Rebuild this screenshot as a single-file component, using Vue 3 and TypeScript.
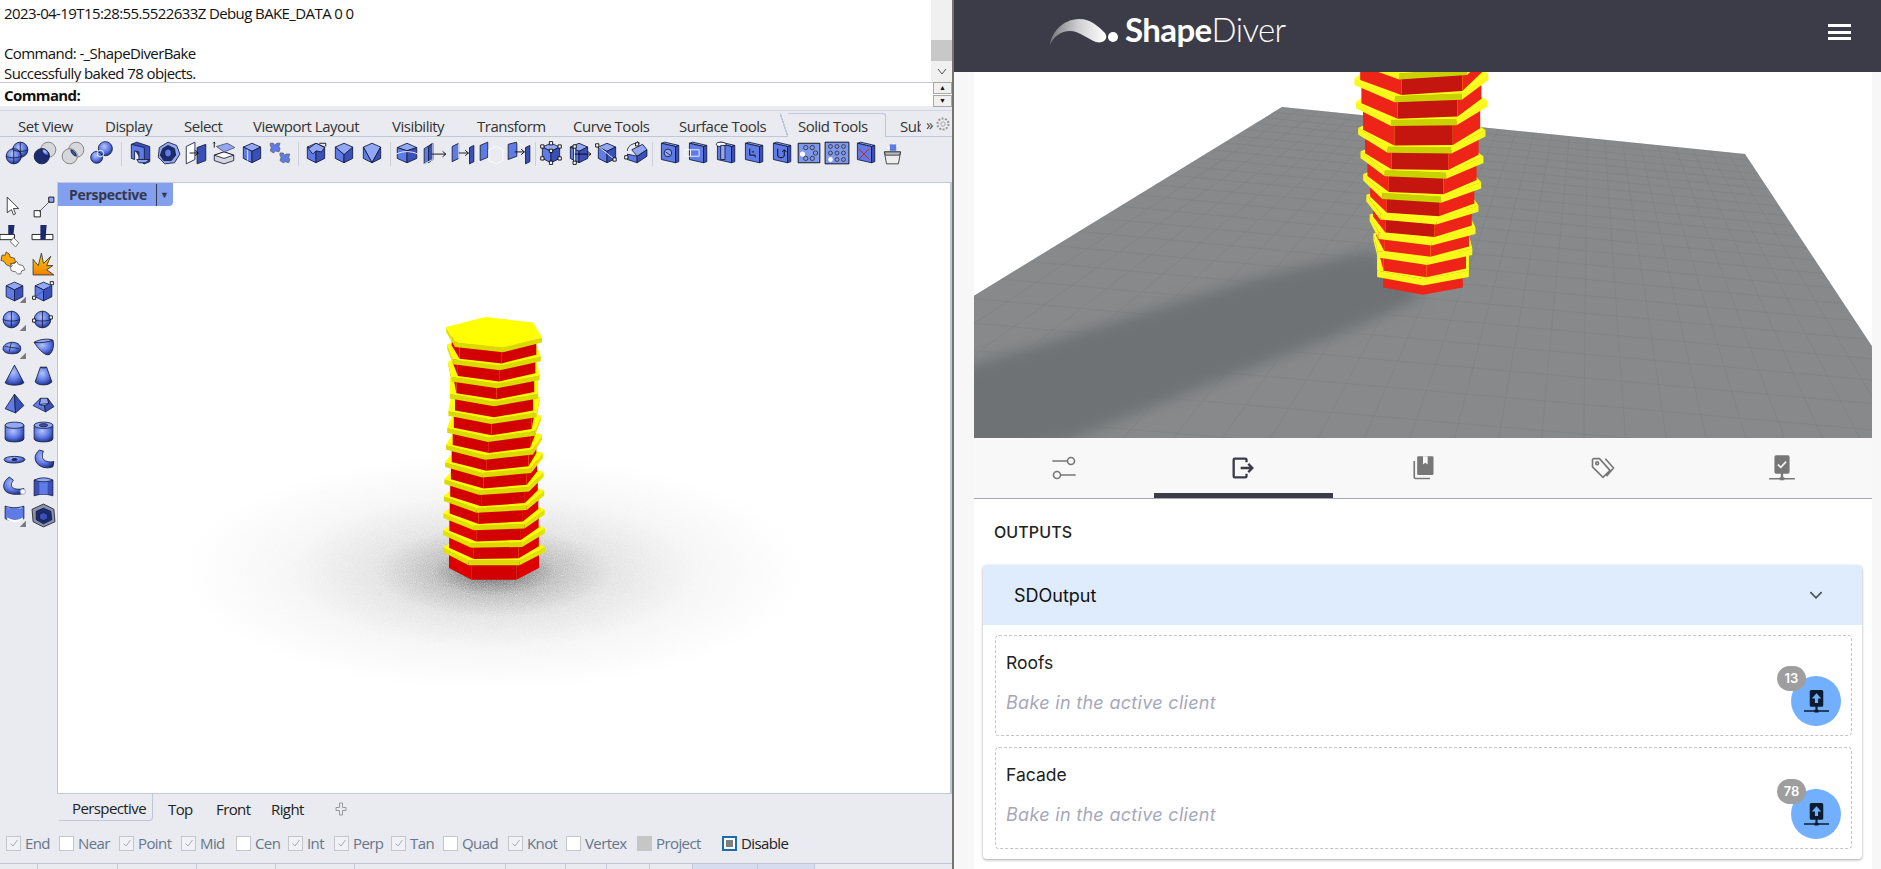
<script setup lang="ts">
type Prim = [string, string, string?]

const circ = (x: number, y: number, r: number) =>
  `M${x - r} ${y}a${r} ${r} 0 1 0 ${2 * r} 0a${r} ${r} 0 1 0 ${-2 * r} 0z`

const T = '#93a8f4'
const L = '#5f7be6'
const R = '#3a4fb8'
const D = '#1c2a70'
const G = '#d6d7da'
const S = 'url(#rb)'
const W = '#ffffff'
const K = '#141c3c'
const NONE = 'none'
const flag: Prim = ['#77787c', 'M23 17v6h-6z', NONE]

const cube: Prim[] = [
  [T, 'M12 3l8 3.5-8 4-8-4z'],
  [L, 'M4 6.5l8 4V21l-8-4z'],
  [R, 'M20 6.5l-8 4V21l8-4z'],
]
const plate: Prim[] = [
  [T, 'M5 3l3-1 13 3-3 1z'],
  [L, 'M5 3l13 3v15L5 18z'],
  [R, 'M18 6l3-1v15l-3 1z'],
]
const handle = (x: number, y: number): Prim => [W, `M${x - 1.5} ${y - 1.5}h3v3h-3z`, '#000']
const arrowR = (x: number, y: number, w: number): Prim => [NONE, `M${x} ${y}h${w}m-3-2.5 3 2.5-3 2.5`, '#000']

const topIcons: (Prim[] | number)[] = [
  [[S, circ(15, 9, 7)], [S, circ(9, 15, 7)], [NONE, 'M2 15c4 2 10 2 14 0M9 8v14M8 9c4 2 10 2 14 0M15 2v12']],
  [[G, circ(15, 9, 7), '#777'], [D, circ(9, 15, 7)], [S, 'M9 8a7 7 0 0 1 7 7 7 7 0 0 1-7-7z']],
  [[G, circ(15, 9, 7), '#777'], [G, circ(9, 15, 7), '#777'], [R, 'M10 9a7 7 0 0 1 5 6 7 7 0 0 1-5-6z']],
  [[S, circ(8, 16, 5.5)], [S, circ(16, 8, 6.5)], [NONE, circ(11.5, 12.5, 3), W]],
  11,
  [[R, 'M4 4l5-2 12 4v14l-5 2z'], [L, 'M4 4l12 3v15l-5-3V11l-4-1v8l-3-1z'], [T, 'M9 18h12l-4 3h-6z']],
  [[T, 'M12 2l8 3 3 8-5 8-9 1-6-6 1-9z'], [D, 'M12 5l6 3 1 6-4 5-7 0-3-5 2-6z'], [L, 'M12 8l3 2v4l-3 2-3-2v-4z']],
  [[W, 'M3 6l8-4v16l-8 4z'], [R, 'M13 7l8-3v15l-8 3z'], arrowR(6, 12, 8)],
  [[G, 'M3 14l9-3 9 3v5l-9 3-9-3z'], [W, 'M3 14l9 3 9-3-9-3z'], [T, 'M5 6l10-3 7 4-10 4z', '#556'], [NONE, 'M3 7V2M2 3l1-1 1 1', '#000']],
  [...cube, [NONE, 'M8 9v10', W]],
  [[L, 'M3 3h3l1 2 2-2h3l-1 3 1 2-1 3-3-1-2 2-3-2 1-3-1-2z', '#667'], [L, 'M12 12h3l1 2 2-1h3l-1 3 1 2-1 3-3-1-2 1-3-2 1-3-1-2z', '#667']],
  8,
  [...cube, [T, 'M5 8l7-5 8 4-3 4-5-1-3 3z'], [NONE, 'M15 3h6v3', '#000']],
  [[T, 'M12 3l8 3.5-2 6-6 1-8-7z'], [L, 'M4 6.5l8 7V21l-8-4z'], [R, 'M20 6.5l-8 7V21l8-4z']],
  [[T, 'M12 3l8 3.5L12 21 4 6.5z'], [L, 'M4 6.5L12 21l-8-4z'], [R, 'M20 6.5L12 21l8-4z']],
  7,
  [[T, 'M12 3l9 4-9 3-9-3z'], [L, 'M3 7l9 3v11l-9-4z'], [R, 'M21 7l-9 3v11l9-4z'], [NONE, 'M2 13c6-3 14-3 20 0', W]],
  [[L, 'M2 8l8-5v15l-8 4z'], [R, 'M6 6l4-3v15l-4 3z'], [NONE, 'M10 3v15l-8 4', W], arrowR(9, 13, 13)],
  [[L, 'M2 6l6-3v14l-6 3z'], [NONE, 'M8 3v14', W], [R, 'M18 7l4-2v15l-4 2z'], arrowR(8, 12, 9)],
  [[L, 'M2 5l7-3v14l-7 3z'], [NONE, 'M10 9l7-3 6 3v10l-6 3-7-3z', W]],
  [[L, 'M2 4l8-2v13l-8 3z'], [NONE, 'M10 2l8 5v13', W], [R, 'M18 7l4-2v15l-4 2z'], arrowR(8, 11, 9)],
  4,
  [...cube, handle(4, 6), handle(12, 3), handle(20, 6), handle(4, 17), handle(12, 21), handle(20, 17), handle(12, 10)],
  [...cube, [W, 'M7 7h2v14H7z'], handle(8, 6), handle(8, 21), arrowR(8, 13, 15)],
  [...cube, [NONE, 'M3 5l16 13', W], handle(3, 5), handle(19, 18)],
  [[T, 'M9 9l10-5 4 5-9 6z'], [L, 'M5 13l9 2v6l-9-3z'], [R, 'M14 15l9-6v6l-9 6z'], [NONE, 'M5 10c0-4 4-7 9-7m0-2l2 2-2 2'], handle(4, 16), handle(14, 4)],
  6,
  [...plate, [T, circ(11, 12, 3.5)], [NONE, 'M9 11l4 3']],
  [...plate, [NONE, 'M1 9h13v6H1zM6 9v6', W]],
  [[T, 'M5 3l3-1 13 3-3 1z'], [L, 'M5 3l13 3v15L5 18z'], [R, 'M18 6l3-1v15l-3 1z'], [W, 'M8 2c3 0 5 1 5 2s-2 2-5 2-4-1-4-2 1-2 4-2z'], [T, 'M8 5h4v13H8z']],
  [...plate, [NONE, 'M9 8v6h5v2M11 11h2', '#000']],
  [...plate, [NONE, 'M9 8v7a4 4 0 0 0 6 0V9m-2 2 2-2 2 2', '#000']],
  [['#7f98ee', 'M2 3h20v18H2z', '#000'], [W, circ(6, 13, 2.4), NONE], [NONE, circ(9, 7, 2) + circ(15, 7, 2) + circ(18, 12, 2) + circ(15, 17, 2) + circ(9, 17, 2), '#333']],
  [['#7f98ee', 'M1 2h22v20H1z', '#000'], [NONE, circ(6, 6, 1.8) + circ(12, 6, 1.8) + circ(18, 6, 1.8) + circ(6, 12, 1.8) + circ(12, 12, 1.8) + circ(18, 12, 1.8) + circ(12, 18, 1.8) + circ(18, 18, 1.8), '#333'], [W, circ(6, 18, 2.2), NONE]],
  [...plate, [NONE, 'M6 8l10 10M16 8L6 18', '#e01010']],
  [[W, 'M5 7l8-5 5 4-8 5z', '#ddd'], [L, 'M9 4h6v6H9z', NONE], ['#eee', 'M4 11h15l-2 11H6z', '#333'], ['#bbb', 'M4 11h15l-1 3H5z', '#333']],
]

const sideIcons: Prim[][] = [
  [[W, 'M5 2v15l4-3 2 5 2-1-2-5h5z', '#222']],
  [[W, 'M3 15h6v6H3z', '#000'], [T, 'M17 2h5v5h-5z', '#000'], [NONE, 'M8 16l10-10', '#444']],
  [[W, 'M-2 11h14v5H-2z', '#000'], [D, 'M6 11V2l6 0-1 9z', NONE], [W, 'M11 14l5 5-3 4-5-5z', '#555']],
  [[W, 'M1 11h20v5H1z', '#000'], [D, 'M9 11V2h6l-1 14H9z', NONE]],
  [['#ffa800', 'M0 4h3l1-3 3 2 1 3 4 1 1 4-4 1-1 3-4-2-2-3-3-1z', '#444'], [W, 'M8 12h4l2-2 2 3 4 1 2 4-3 1-1 3-3 0-2-2-4-1-1-3 2-2z', '#555']],
  [['url(#burst)', 'M2 23V8l5 6 3-12 2 10 7-7-4 9h6l-6 4 7 5z', '#333']],
  [...cube, flag],
  [...cube, handle(20, 4), handle(3, 18), [NONE, 'M20 6L4 17', R]],
  [[S, circ(9, 12, 8)], [NONE, 'M1 12c4 2 12 2 16 0M9 4v16'], flag],
  [[S, circ(11, 12, 8)], [NONE, 'M3 12c4 2 12 2 16 0M11 4v16'], handle(3, 13), handle(19, 10)],
  [[S, 'M1 13c0-4 5-6 9-6s8 2 8 6-4 5-8 5-9-1-9-5z'], [NONE, 'M3 11l13 2M9 7l-2 9'], flag],
  [[T, 'M3 7c5-3 14-4 18-2l-4 14z'], [S, 'M3 7c5 1 12 0 18-2 2 6-1 14-5 14S6 12 3 7z']],
  [[S, 'M12 2L3 19c3 3 15 3 18 0z']],
  [[S, 'M9 4h6l5 14c-2 4-14 4-16 0z'], [NONE, 'M9 4c2 1 4 1 6 0']],
  [[L, 'M12 3L3 17l10 4z'], [R, 'M12 3l9 11-8 7z']],
  [[T, 'M9 7h7l1 5-9 1z'], [L, 'M2 14l7-7-1 6 5 1 1 6z'], [R, 'M16 7l6 8-8 5-1-6 4-2z']],
  [[S, 'M3 6v13c0 4 18 4 18 0V6z'], [T, 'M3 6c0-4 18-4 18 0s-18 4-18 0z']],
  [[S, 'M3 6v13c0 4 18 4 18 0V6z'], [T, 'M3 6c0-4 18-4 18 0s-18 4-18 0z'], [R, 'M8 6c0-2 8-2 8 0s-8 2-8 0z']],
  [[S, 'M2 12c0-4 20-4 20 0s-20 5-20 0z'], [D, 'M9 12c0-2 6-2 6 0s-6 2-6 0z', NONE]],
  [[S, 'M8 3c-5 4-5 9-2 13 4 4 10 5 15 3l1-5c-4 1-8 0-10-2-2-3-1-6 0-8z']],
  [[S, 'M7 2C1 6 0 12 4 16c4 3 11 3 16 2l1-5c-4 1-9 1-11-1-2-2-1-5 1-7z'], [W, circ(20, 16, 2.5), '#8899dd']],
  [[R, 'M3 5c6-2 12-2 18 0v15c-6-2-12-2-18 0z'], [L, 'M8 5c3 0 5 0 8 0v14c-3-1-5-1-8 0z', NONE], [T, 'M3 5c6-3 12-3 18 0-6 2-12 2-18 0z']],
  [[L, 'M3 3c6 2 12 2 18 0v12c-6 3-12 3-18 0z'], [W, 'M5 14c5 3 10 3 15 0v2c-5 3-10 3-15 0z', NONE], [W, 'M5 4c5 2 9 2 14 0 1 2-14 2-14 0z', NONE], flag],
  [['#8a90b0', 'M12 1l10 5 1 12-11 5-10-5-1-12z', '#222'], [D, 'M12 5l7 3 1 8-8 4-7-4 0-8z'], [R, 'M12 9l4 2v4l-4 2-4-2v-4z']],
]

const ribbon = [
  { label: 'Set View', w: 87 }, { label: 'Display', w: 79 }, { label: 'Select', w: 69 },
  { label: 'Viewport Layout', w: 139 }, { label: 'Visibility', w: 85 }, { label: 'Transform', w: 96 },
  { label: 'Curve Tools', w: 106 }, { label: 'Surface Tools', w: 119 },
  { label: 'Solid Tools', w: 102, on: true }, { label: 'Sub', w: 26 },
]

const osnaps = [
  { label: 'End', w: 53, state: 'on' }, { label: 'Near', w: 60, state: '' }, { label: 'Point', w: 62, state: 'on' },
  { label: 'Mid', w: 55, state: 'on' }, { label: 'Cen', w: 52, state: '' }, { label: 'Int', w: 46, state: 'on' },
  { label: 'Perp', w: 57, state: 'on' }, { label: 'Tan', w: 52, state: 'on' }, { label: 'Quad', w: 65, state: '' },
  { label: 'Knot', w: 58, state: 'on' }, { label: 'Vertex', w: 71, state: '' }, { label: 'Project', w: 85, state: 'solid' },
  { label: 'Disable', w: 70, state: 'disable' },
]

const statusCells = [38, 80, 79, 79, 79, 151, 60, 41, 43, 43, 65, 57]

type Face = { pts: string; fill: string }
type Palette = { top: string; front: string; side: string; redFront: string; redSide: string; bandCut: number; redCut: number }

const hexAt = (cx: number, cy: number, r: number, a: number, k: number) =>
  Array.from({ length: 6 }, (_, j) => {
    const t = ((a + 60 * j) * Math.PI) / 180
    return [cx + r * Math.cos(t), cy + r * k * Math.sin(t)]
  })

const fmt = (p: number[][]) => p.map((q) => `${q[0].toFixed(1)},${q[1].toFixed(1)}`).join(' ')

function prismSides(cx: number, cyTop: number, cyBot: number, r: number, a: number, k: number, front: string, side: string, cut: number) {
  const up = hexAt(cx, cyTop, r, a, k)
  const dn = hexAt(cx, cyBot, r, a, k)
  const out: Face[] = []
  for (let j = 0; j < 6; j++) {
    const n = (j + 1) % 6
    const mid = Math.sin(((a + 60 * j + 30) * Math.PI) / 180)
    if (mid <= -0.05) continue
    out.push({ pts: fmt([up[j], up[n], dn[n], dn[j]]), fill: mid > cut ? front : side })
  }
  return out
}

type Floor = { cx: number; y: number; r: number; a: number }

function tower(floors: Floor[], baseY: number, inset: number, slab: number, k: number, pal: Palette) {
  const faces: Face[] = []
  floors.forEach((f, i) => {
    const prevY = i === 0 ? baseY : floors[i - 1].y
    faces.push(...prismSides(f.cx, f.y + slab, prevY, f.r - inset, f.a, k, pal.redFront, pal.redSide, pal.redCut))
    faces.push(...prismSides(f.cx, f.y, f.y + slab, f.r, f.a, k, pal.front, pal.side, pal.bandCut))
    faces.push({ pts: fmt(hexAt(f.cx, f.y, f.r, f.a, k)), fill: pal.top })
  })
  return faces
}

const leftFloors: Floor[] = Array.from({ length: 13 }, (_, i) => ({
  cx: 494, y: 547 - 17.9 * i, r: 51, a: 120 - (40 * i) / 12,
}))
const leftTower = tower(leftFloors, 568, 6, 5, 0.3, {
  top: '#ffff00', front: '#dada00', side: '#e2e200', redFront: '#d20000', redSide: '#de0000', bandCut: 0.62, redCut: 0.62,
})

const rightY = [262, 241, 221, 200, 178, 154, 129, 101, 76, 52, 27]
const rightFloors: Floor[] = rightY.map((y, i) => ({
  cx: 1423 - i * 0.2, y, r: 53 + i * 1.8, a: 90 - i * 4.6,
}))
const rightTower = tower(rightFloors, 280, 7, 6.5, 0.32, {
  top: '#ffff1a', front: '#c9d100', side: '#f8f81a', redFront: '#c4150f', redSide: '#ee2418', bandCut: 0.97, redCut: 0.95,
})

// ground plane grid, square to quad mapping
const q = [[1282, 107], [1745, 154], [2066, 640], [600, 525]]
const dx1 = q[1][0] - q[2][0]
const dx2 = q[3][0] - q[2][0]
const dx3 = q[0][0] - q[1][0] + q[2][0] - q[3][0]
const dy1 = q[1][1] - q[2][1]
const dy2 = q[3][1] - q[2][1]
const dy3 = q[0][1] - q[1][1] + q[2][1] - q[3][1]
const den = dx1 * dy2 - dx2 * dy1
const g = (dx3 * dy2 - dx2 * dy3) / den
const h = (dx1 * dy3 - dx3 * dy1) / den
const project = (u: number, v: number) => {
  const w = g * u + h * v + 1
  const x = ((q[1][0] - q[0][0] + g * q[1][0]) * u + (q[3][0] - q[0][0] + h * q[3][0]) * v + q[0][0]) / w
  const y = ((q[1][1] - q[0][1] + g * q[1][1]) * u + (q[3][1] - q[0][1] + h * q[3][1]) * v + q[0][1]) / w
  return `${x.toFixed(1)} ${y.toFixed(1)}`
}
const gridPath = Array.from({ length: 27 }, (_, i) => {
  const t = i / 26
  return `M${project(t, 0)}L${project(t, 1)}M${project(0, t)}L${project(1, t)}`
}).join('')

const panelTabs: { prims: Prim[]; on?: boolean }[] = [
  { prims: [[NONE, `M2 6h13M22 18H9${circ(18, 6, 3)}${circ(6, 18, 3)}`]] },
  { prims: [[NONE, 'M15 7V5a1 1 0 0 0-1-1H5a1 1 0 0 0-1 1v14a1 1 0 0 0 1 1h9a1 1 0 0 0 1-1v-2M10 12h10m-3.5-3.5 3.5 3.5-3.5 3.5']], on: true },
  { prims: [[NONE, 'M4.5 6v14a1 1 0 0 0 1 1H18'], ['#777', 'M8 2h12a1 1 0 0 1 1 1v14a1 1 0 0 1-1 1H8a1 1 0 0 1-1-1V3a1 1 0 0 1 1-1z', NONE], ['#f8f8f8', 'M12 2v7l2-1.5L16 9V2z', NONE]] },
  { prims: [[NONE, `M3 5v6l9 9 6-6-9-10H4a1 1 0 0 0-1 1zM14 4l7 8-6 7${circ(7, 8, 1.2)}`]] },
  { prims: [['#777', 'M7 1h10a1.5 1.5 0 0 1 1.5 1.5v13a1.5 1.5 0 0 1-1.5 1.5H7a1.5 1.5 0 0 1-1.5-1.5v-13A1.5 1.5 0 0 1 7 1zM11 17h2v3h-2zM10 20h4v2.5h-4zM1 20.5h22v1.4H1z', NONE], [NONE, 'M8.5 9l2.5 2.5 4.5-5', '#f8f8f8']] },
]

const outputs = [
  { name: 'Roofs', count: 13 },
  { name: 'Facade', count: 78 },
]
</script>

<template>
  <div class="screen">
    <svg class="defs" width="0" height="0">
      <defs>
        <radialGradient id="rb" cx="0.42" cy="0.35" r="0.7">
          <stop offset="0" stop-color="#b4c4fa" />
          <stop offset="0.55" stop-color="#5f7be6" />
          <stop offset="1" stop-color="#1f2f88" />
        </radialGradient>
        <linearGradient id="burst" x1="0" y1="0" x2="0" y2="1">
          <stop offset="0" stop-color="#ffd000" />
          <stop offset="1" stop-color="#f08000" />
        </linearGradient>
      </defs>
    </svg>

    <section class="rhino">
      <div class="history">
        <div class="history__text">
          <div>2023-04-19T15:28:55.5522633Z Debug BAKE_DATA 0 0</div>
          <div>&nbsp;</div>
          <div>Command: -_ShapeDiverBake</div>
          <div>Successfully baked 78 objects.</div>
        </div>
        <div class="scroll">
          <div class="scroll__thumb"></div>
          <svg class="scroll__down" width="10" height="8" viewBox="0 0 10 8"><path d="M1 1l4 5 4-5" fill="none" stroke="#555" /></svg>
        </div>
      </div>
      <div class="command">
        <b>Command:</b>
        <div class="spin">
          <span class="spin__btn">▲</span>
          <span class="spin__btn">▼</span>
        </div>
      </div>

      <div class="ribbon">
        <div v-for="t in ribbon" :key="t.label" class="ribbon__tab" :class="{ 'ribbon__tab--on': t.on }" :style="{ width: t.w + 'px' }">{{ t.label }}</div>
        <div class="ribbon__more">
          <span>»</span>
          <svg width="16" height="16" viewBox="0 0 16 16"><circle cx="8" cy="8" r="5.5" fill="none" stroke="#999" stroke-width="2" stroke-dasharray="2 1.4" /><circle cx="8" cy="8" r="2.2" fill="none" stroke="#aaa" /></svg>
        </div>
      </div>

      <div class="tools">
        <template v-for="(item, i) in topIcons" :key="i">
          <span v-if="typeof item === 'number'" class="tools__sep" :style="{ width: item + 'px' }"></span>
          <svg v-else class="ico" viewBox="0 0 24 24" width="26" height="26">
            <path v-for="(p, n) in item" :key="n" :d="p[1]" :fill="p[0]" :stroke="p[2] || K" stroke-width="0.8" />
          </svg>
        </template>
      </div>

      <div class="work">
        <div class="side">
          <svg v-for="(item, i) in sideIcons" :key="i" class="ico" viewBox="0 0 24 24" width="25" height="25">
            <path v-for="(p, n) in item" :key="n" :d="p[1]" :fill="p[0]" :stroke="p[2] || K" stroke-width="0.8" />
          </svg>
        </div>
        <div class="viewport">
          <svg class="scene" viewBox="58 183 892 610" width="892" height="610">
            <defs>
              <radialGradient id="floorShade" gradientUnits="userSpaceOnUse" cx="0" cy="0" r="1" gradientTransform="translate(494 572) scale(310 118)">
                <stop offset="0" stop-color="#5a5a5a" />
                <stop offset="0.1" stop-color="#8a8a8a" />
                <stop offset="0.2" stop-color="#bcbcbc" />
                <stop offset="0.38" stop-color="#e2e2e2" />
                <stop offset="0.65" stop-color="#f5f5f5" />
                <stop offset="1" stop-color="#fff" />
              </radialGradient>
              <filter id="grain" x="0" y="0" width="100%" height="100%">
                <feTurbulence type="fractalNoise" baseFrequency="1.1" numOctaves="1" seed="4" />
                <feColorMatrix values="0 0 0 0 1  0 0 0 0 1  0 0 0 0 1  1.6 0 0 0 -0.55" />
                <feComposite in2="SourceGraphic" operator="in" />
              </filter>
            </defs>
            <rect x="58" y="183" width="892" height="610" fill="#fff" />
            <ellipse cx="494" cy="572" rx="310" ry="118" fill="url(#floorShade)" />
            <ellipse cx="494" cy="572" rx="310" ry="118" fill="#fff" opacity="0.55" filter="url(#grain)" />
            <polygon v-for="(f, i) in leftTower" :key="i" :points="f.pts" :fill="f.fill" />
          </svg>
          <div class="viewport__tag">
            <b>Perspective</b>
            <span class="viewport__drop">▼</span>
          </div>
        </div>
      </div>

      <div class="views">
        <span class="views__tab views__tab--on">Perspective</span>
        <span class="views__tab" style="width: 48px">Top</span>
        <span class="views__tab" style="width: 55px">Front</span>
        <span class="views__tab" style="width: 64px">Right</span>
        <svg width="12" height="14" viewBox="0 0 12 14"><path d="M4.5 1h3v4.500h3.500v3H7.500V13h-3V8.500H1v-3h3.500z" fill="none" stroke="#999" /></svg>
      </div>

      <div class="osnap">
        <label v-for="o in osnaps" :key="o.label" class="snap" :class="{ 'snap--disable': o.state === 'disable' }" :style="{ width: o.w + 'px' }">
          <span class="snap__box" :class="'snap__box--' + (o.state || 'off')">
            <svg v-if="o.state === 'on'" width="10" height="10" viewBox="0 0 10 10"><path d="M1.500 5.500l2.500 2.500 4.500-6" fill="none" stroke="#aab" /></svg>
          </span>
          {{ o.label }}
        </label>
      </div>

      <div class="status">
        <span v-for="(w, i) in statusCells" :key="i" class="status__cell" :class="{ 'status__cell--on': i === 10 || i === 11 }" :style="{ width: w + 'px' }"></span>
      </div>
    </section>

    <div class="divider"></div>

    <section class="app">
      <header class="app__bar">
        <div class="logo">
          <svg width="58" height="30" viewBox="1048 14 58 30">
            <defs>
              <linearGradient id="swoosh" x1="0" y1="0" x2="1" y2="0">
                <stop offset="0" stop-color="#77777f" />
                <stop offset="0.5" stop-color="#cfcfd2" />
                <stop offset="1" stop-color="#fff" />
              </linearGradient>
            </defs>
            <path d="M1049 42C1050 30 1062 16 1078 16C1090 16 1098 24 1104 30C1108 36 1102 41 1095 39C1087 36 1078 28 1069 28C1060 28 1052 34 1049 42Z" fill="url(#swoosh)" />
          </svg>
          <span class="logo__dot"></span>
          <span class="logo__text"><span class="logo__strong">Shape</span>Diver</span>
        </div>
        <div class="burger"><i></i><i></i><i></i></div>
      </header>

      <div class="app__body">
        <svg class="viewer" viewBox="974 72 898 366" width="898" height="366">
          <defs>
            <filter id="soft" x="-20%" y="-20%" width="140%" height="140%"><feGaussianBlur stdDeviation="7" /></filter>
            <clipPath id="groundClip"><polygon points="1282,107 1745,154 2066,640 600,525" /></clipPath>
          </defs>
          <rect x="974" y="72" width="898" height="366" fill="#fff" />
          <polygon points="1282,107 1745,154 2066,640 600,525" fill="#87898b" />
          <g clip-path="url(#groundClip)">
            <polygon points="1371,250 1249,280 1045,343 960,368 960,460 1069,440 1202,387 1342,333 1423,297" fill="#6e7275" filter="url(#soft)" />
            <path :d="gridPath" fill="none" stroke="#6f7778" stroke-width="0.6" opacity="0.4" />
          </g>
          <polygon v-for="(f, i) in rightTower" :key="i" :points="f.pts" :fill="f.fill" />
        </svg>

        <nav class="tabs">
          <div v-for="(t, i) in panelTabs" :key="i" class="tabs__item" :class="{ 'tabs__item--on': t.on }">
            <svg width="28" height="28" viewBox="0 0 24 24">
              <path v-for="(p, n) in t.prims" :key="n" :d="p[1]" :fill="p[0]" :stroke="p[2] || (t.on ? '#3c3c48' : '#777')" :stroke-width="t.on ? 2 : 1.4" />
            </svg>
          </div>
        </nav>

        <div class="panel">
          <h2 class="panel__title">OUTPUTS</h2>
          <div class="card">
            <div class="card__head">
              <span>SDOutput</span>
              <svg width="18" height="18" viewBox="0 0 16 16"><path d="M3 5.500l5 5 5-5" fill="none" stroke="#495057" stroke-width="1.500" /></svg>
            </div>
            <div class="card__body">
              <div v-for="o in outputs" :key="o.name" class="output">
                <div class="output__text">
                  <div class="output__name">{{ o.name }}</div>
                  <div class="output__hint">Bake in the active client</div>
                </div>
                <button class="fab">
                  <span class="fab__badge">{{ o.count }}</span>
                  <svg width="25" height="25" viewBox="0 0 24 24">
                    <path d="M7 1h10a1.500 1.500 0 0 1 1.500 1.500v13A1.500 1.500 0 0 1 17 17H7a1.500 1.500 0 0 1-1.500-1.500v-13A1.500 1.500 0 0 1 7 1zM11 17h2v3h-2zM10 20h4v2.500h-4zM0 20.500h24v1.400H0z" fill="#0d1b2e" />
                    <path d="M12 4l4.500 5H13.500v4.500h-3V9H7.500z" fill="#72b0ff" />
                  </svg>
                </button>
              </div>
            </div>
          </div>
        </div>
      </div>
    </section>
  </div>
</template>

<style scoped>
.screen {
  display: flex;
  width: 1881px;
  height: 869px;
  overflow: hidden;
  background: #f7f7f7;
}

.defs {
  position: absolute;
}

.rhino {
  display: flex;
  flex-direction: column;
  width: 952px;
  height: 869px;
  flex: none;
  background: #e9ebf0;
  font-family: "Open Sans", "Liberation Sans", sans-serif;
  font-size: 15px;
  letter-spacing: -0.6px;
  color: #111;
}

.divider {
  width: 2px;
  flex: none;
  background: #77736e;
}

.history {
  display: flex;
  height: 82px;
  flex: none;
  background: #fff;
  border-bottom: 1px solid #c2c8da;
  box-sizing: content-box;
  overflow: hidden;
}

.history__text {
  flex: 1;
  padding: 3px 0 0 4px;
  line-height: 20px;
}

.scroll {
  position: relative;
  width: 21px;
  background: #f0f0f0;
}

.scroll__thumb {
  position: absolute;
  top: 40px;
  left: 0;
  right: 0;
  height: 21px;
  background: #c8c8c8;
}

.scroll__down {
  position: absolute;
  left: 6px;
  top: 68px;
}

.command {
  display: flex;
  justify-content: space-between;
  align-items: center;
  height: 23px;
  flex: none;
  padding-left: 4px;
  background: #fff;
}

.spin {
  display: flex;
  flex-direction: column;
  width: 21px;
  gap: 1px;
}

.spin__btn {
  height: 10px;
  margin-left: 2px;
  width: 17px;
  border: 1px solid #a8a8a8;
  background: #f0f0f0;
  font-size: 7px;
  line-height: 10px;
  text-align: center;
  letter-spacing: 0;
}

.ribbon {
  position: relative;
  display: flex;
  align-items: stretch;
  height: 27px;
  flex: none;
  margin-top: 4px;
  padding-left: 18px;
  border-top: 1px solid #d3d6e0;
  border-bottom: 1px solid #c0c6dc;
  box-sizing: border-box;
  color: #333;
  line-height: 30px;
  letter-spacing: -0.5px;
}

.ribbon__tab {
  position: relative;
  flex: none;
  white-space: nowrap;
}

.ribbon__tab--on {
  z-index: 1;
}

/* lifted tab with its slanted left edge */
.ribbon__tab--on::before {
  content: "";
  position: absolute;
  top: 2px;
  left: -10px;
  right: 14px;
  bottom: -1px;
  z-index: -1;
  border-top: 1px solid #c0c6dc;
  border-right: 1px solid #c0c6dc;
  border-top-right-radius: 3px;
  background: #e9ebf0;
}

.ribbon__tab--on::after {
  content: "";
  position: absolute;
  top: 2px;
  left: -18px;
  bottom: -1px;
  width: 8px;
  z-index: -1;
  background: linear-gradient(to top right, transparent calc(50% - 0.7px), #c0c6dc calc(50% - 0.7px), #c0c6dc calc(50% + 0.7px), #e9ebf0 calc(50% + 0.7px));
}

.ribbon__more {
  position: absolute;
  z-index: 2;
  top: 0;
  right: 0;
  bottom: 0;
  display: flex;
  align-items: center;
  gap: 2px;
  width: 31px;
  box-sizing: border-box;
  padding-left: 5px;
  background: #e9ebf0;
  color: #444;
}

.tools {
  display: flex;
  align-items: center;
  height: 45px;
  flex: none;
  padding-left: 3px;
  padding-bottom: 14px;
  box-sizing: border-box;
}

.ico {
  flex: none;
  margin: 0 1px;
  overflow: visible;
}

.tools__sep {
  position: relative;
  flex: none;
  align-self: stretch;
}

.tools__sep::after {
  content: "";
  position: absolute;
  left: 50%;
  top: 5px;
  bottom: 2px;
  width: 1px;
  background: #cfd1d8;
}

.work {
  display: flex;
  flex: 1;
  min-height: 0;
}

.side {
  display: grid;
  grid-template-columns: 29px 29px;
  grid-auto-rows: 28px;
  justify-items: center;
  align-items: center;
  align-content: start;
  width: 64px;
  flex: none;
  margin-left: -6px;
  padding: 11px 0 0 6px;
  box-sizing: border-box;
  border-right: 1px solid #c0c6dc;
  overflow: hidden;
}

.viewport {
  position: relative;
  flex: 1;
  border-right: 2px solid #c0c6dc;
  border-top: 1px solid #c0c6dc;
  border-bottom: 1px solid #c0c6dc;
  background: #fff;
  overflow: hidden;
}

.scene {
  display: block;
}

.viewport__tag {
  position: absolute;
  top: 0;
  left: 0;
  display: flex;
  align-items: center;
  width: 115px;
  height: 23px;
  padding-left: 11px;
  box-sizing: border-box;
  background: #83a0ee;
  border-bottom-right-radius: 4px;
  color: #33384d;
  font-size: 14px;
  letter-spacing: -0.3px;
}

.viewport__drop {
  margin-left: 9px;
  padding-left: 3px;
  border-left: 1px solid #33384d;
  font-size: 9px;
  line-height: 22px;
  letter-spacing: 0;
}

.views {
  display: flex;
  align-items: center;
  height: 29px;
  flex: none;
  padding-left: 59px;
  color: #222;
}

.views__tab {
  flex: none;
}

.views__tab--on {
  width: 94px;
  height: 27px;
  margin-right: 15px;
  padding-left: 13px;
  box-sizing: border-box;
  align-self: flex-start;
  line-height: 28px;
  border-right: 1px solid #c0c6dc;
  border-bottom: 1px solid #c0c6dc;
  border-bottom-right-radius: 4px;
}

.osnap {
  display: flex;
  align-items: center;
  height: 41px;
  flex: none;
  padding-left: 6px;
  color: #66768a;
  border-bottom: 1px solid #c4c8d6;
  box-sizing: border-box;
}

.snap {
  display: flex;
  align-items: center;
  gap: 4px;
  flex: none;
  white-space: nowrap;
}

.snap--disable {
  color: #222;
}

.snap__box {
  display: flex;
  align-items: center;
  justify-content: center;
  width: 15px;
  height: 15px;
  flex: none;
  border: 1px solid #c4c6cc;
  background: #fff;
  box-sizing: border-box;
}

.snap__box--on {
  background: #f1f2f5;
}

.snap__box--solid {
  background: #c6c6c6;
}

.snap__box--disable {
  border: 2px solid #1c6eaa;
  background: #fff;
}

.snap__box--disable::after {
  content: "";
  width: 7px;
  height: 7px;
  background: #7f7f7f;
}

.status {
  display: flex;
  height: 5px;
  flex: none;
}

.status__cell {
  flex: none;
  border-right: 1px solid #c4c8d6;
  box-sizing: border-box;
}

.status__cell--on {
  background: #d7dcef;
}

.app {
  display: flex;
  flex-direction: column;
  flex: 1;
  min-width: 0;
  font-family: Inter, "Liberation Sans", sans-serif;
}

.app__bar {
  display: flex;
  align-items: flex-start;
  justify-content: space-between;
  height: 72px;
  flex: none;
  padding: 14px 30px 0 95px;
  box-sizing: border-box;
  background: #3c3c48;
}

.logo {
  display: flex;
  align-items: center;
  height: 36px;
  color: #fff;
}

.logo__dot {
  width: 10px;
  height: 10px;
  margin: 10px 7px 0 1px;
  border-radius: 50%;
  background: #fff;
}

.logo__text {
  padding-bottom: 6px;
  font-family: Lato, sans-serif;
  font-size: 33px;
  font-weight: 300;
  line-height: 36px;
  letter-spacing: -0.6px;
}

.logo__strong {
  font-weight: 700;
}

.burger {
  display: flex;
  flex-direction: column;
  gap: 3.5px;
  width: 23px;
  margin-top: 10px;
}

.burger i {
  display: block;
  height: 3px;
  background: #fff;
}

.app__body {
  display: flex;
  flex-direction: column;
  flex: 1;
  min-height: 0;
  margin: 0 9px 0 20px;
}

.viewer {
  display: block;
  flex: none;
}

.tabs {
  display: flex;
  height: 61px;
  flex: none;
  box-sizing: border-box;
  border-bottom: 1px solid #a4a5bc;
  background: #f8f8f8;
}

.tabs__item {
  display: flex;
  align-items: center;
  justify-content: center;
  width: 180px;
  height: 60px;
  box-sizing: border-box;
}

.tabs__item--on {
  border-bottom: 5px solid #3c3c48;
  padding-top: 5px;
}

.panel {
  flex: 1;
  min-height: 0;
  background: #fff;
}

.panel__title {
  margin: 0;
  padding: 25px 20px 0;
  font-size: 16px;
  font-weight: 500;
  line-height: 17px;
  letter-spacing: 0.1px;
  color: #222;
}

.card {
  margin: 24px 10px 0 9px;
  height: 294px;
  border-radius: 4px;
  background: #fff;
  box-shadow: 0 1px 3px rgba(0, 0, 0, 0.35);
  overflow: hidden;
}

.card__head {
  display: flex;
  align-items: center;
  justify-content: space-between;
  height: 60px;
  padding: 0 37px 0 31px;
  background: #dfecfd;
  font-size: 18px;
  color: #111;
}

.card__body {
  display: flex;
  flex-direction: column;
  gap: 11px;
  padding: 10px 10px 0 12px;
}

.output {
  display: flex;
  justify-content: space-between;
  align-items: flex-end;
  height: 101px;
  padding: 0 10px 9px 10px;
  box-sizing: border-box;
  border: 1px dashed #c4c4c4;
  border-radius: 4px;
}

.output:last-child {
  height: 102px;
}

.output__text {
  align-self: flex-start;
}

.output__name {
  margin-top: 17px;
  font-size: 17.5px;
  line-height: 20px;
  color: #222;
}

.output__hint {
  margin-top: 20px;
  font-size: 18px;
  font-style: italic;
  line-height: 20px;
  letter-spacing: 0.3px;
  color: #a7a7ba;
}

.fab {
  position: relative;
  display: flex;
  align-items: center;
  justify-content: center;
  width: 50px;
  height: 50px;
  flex: none;
  padding: 0;
  border: 0;
  border-radius: 50%;
  background: #72b0ff;
}

.fab__badge {
  position: absolute;
  top: -10px;
  right: 35px;
  min-width: 29px;
  height: 25px;
  padding: 0 5px;
  box-sizing: border-box;
  border-radius: 13px;
  background: #9e9e9e;
  font-family: Inter, sans-serif;
  font-size: 13px;
  font-weight: 600;
  line-height: 25px;
  text-align: center;
  color: #fff;
}
</style>

<style>
html,
body {
  margin: 0;
  overflow: hidden;
}
</style>
